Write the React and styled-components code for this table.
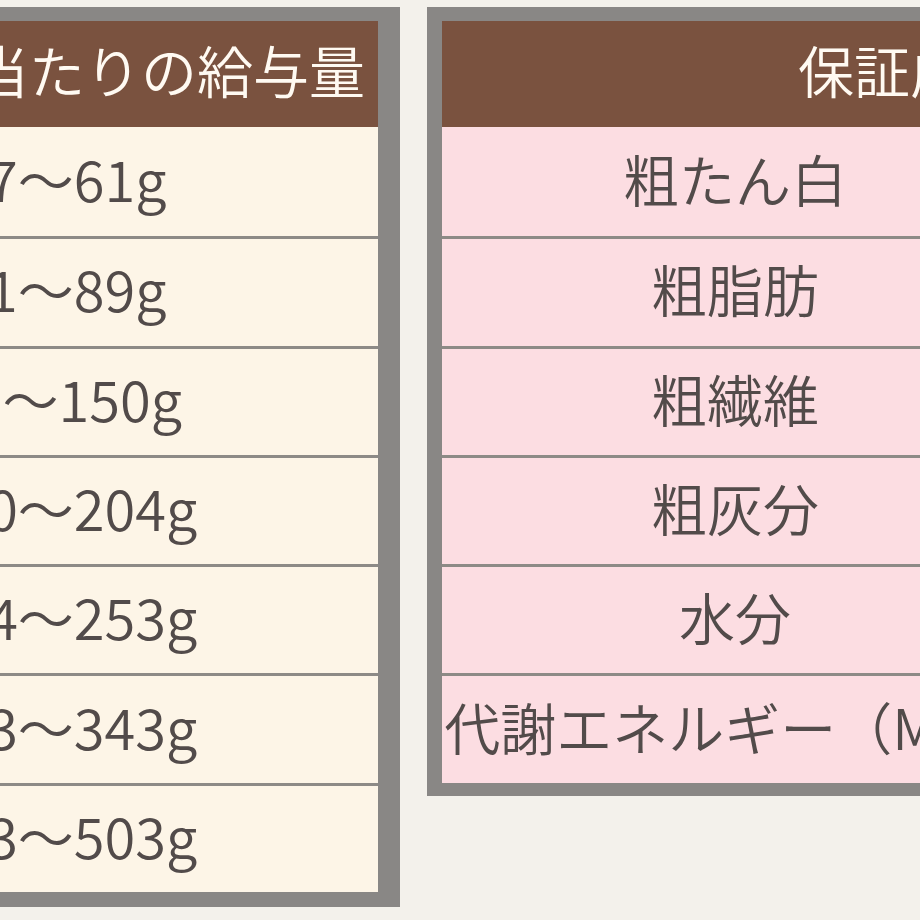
import React from "react";
import styled, { createGlobalStyle } from "styled-components";

const GlobalStyle = createGlobalStyle`
  html, body {
    margin: 0;
    padding: 0;
  }
  body {
    width: 920px;
    height: 920px;
    overflow: hidden;
    background: #f3f1eb;
    font-family: "Noto Sans CJK JP", "Noto Sans", sans-serif;
  }
`;

const Page = styled.div`
  display: flex;
  align-items: flex-start;
  gap: 27px;
  padding-top: 7px;
  margin-left: -400px;
  width: max-content;
`;

const Frame = styled.div`
  border-style: solid;
  border-color: #898785;
  border-width: 14px ${(p) => p.$right}px ${(p) => p.$bottom}px ${(p) => p.$left}px;
  width: ${(p) => p.$width}px;
`;

const Head = styled.div`
  height: 106px;
  box-sizing: border-box;
  padding: 0 13px 10px;
  background: #7a523f;
  color: #fffaf2;
  font-size: 56px;
  font-weight: 350;
  line-height: 1;
  display: flex;
  align-items: center;
  justify-content: ${(p) => p.$align};
  white-space: nowrap;
`;

const Row = styled.div`
  display: grid;
  grid-template-columns: ${(p) => p.$cols};
  height: 109.3px;
  box-sizing: border-box;
  background: ${(p) => p.$bg};
  & + & {
    border-top: 3px solid #8d8a86;
  }
`;

const Cell = styled.div`
  display: flex;
  align-items: center;
  justify-content: center;
  padding-bottom: 8px;
  font-size: 56px;
  font-weight: 350;
  line-height: 1;
  color: #524b4a;
  white-space: nowrap;
  & + & {
    border-left: 3px solid #8d8a86;
  }
`;

const feeding = [
  ["1kg", "37～61g"],
  ["2kg", "51～89g"],
  ["4kg", "91～150g"],
  ["6kg", "120～204g"],
  ["8kg", "154～253g"],
  ["12kg", "203～343g"],
  ["20kg", "303～503g"],
];

const analysis = [
  ["粗たん白", "22.0%以上"],
  ["粗脂肪", "12.0%以上"],
  ["粗繊維", "4.0%以下"],
  ["粗灰分", "8.0%以下"],
  ["水分", "10.0%以下"],
  ["代謝エネルギー（ME）", "350kcal"],
];

const App = () => (
  <>
    <GlobalStyle />
    <Page>
      <Frame $width={764} $left={14} $right={22} $bottom={15}>
        <Head $align="flex-end">1日当たりの給与量</Head>
        {feeding.map(([w, g]) => (
          <Row key={w} $cols="128px 636px" $bg="#fdf5e7">
            <Cell>{w}</Cell>
            <Cell>{g}</Cell>
          </Row>
        ))}
      </Frame>
      <Frame $width={992} $left={15} $right={14} $bottom={13}>
        <Head $align="center">保証成分値</Head>
        {analysis.map(([name, val]) => (
          <Row key={name} $cols="586px 406px" $bg="#fcdde2">
            <Cell>{name}</Cell>
            <Cell>{val}</Cell>
          </Row>
        ))}
      </Frame>
    </Page>
  </>
);

export default App;
